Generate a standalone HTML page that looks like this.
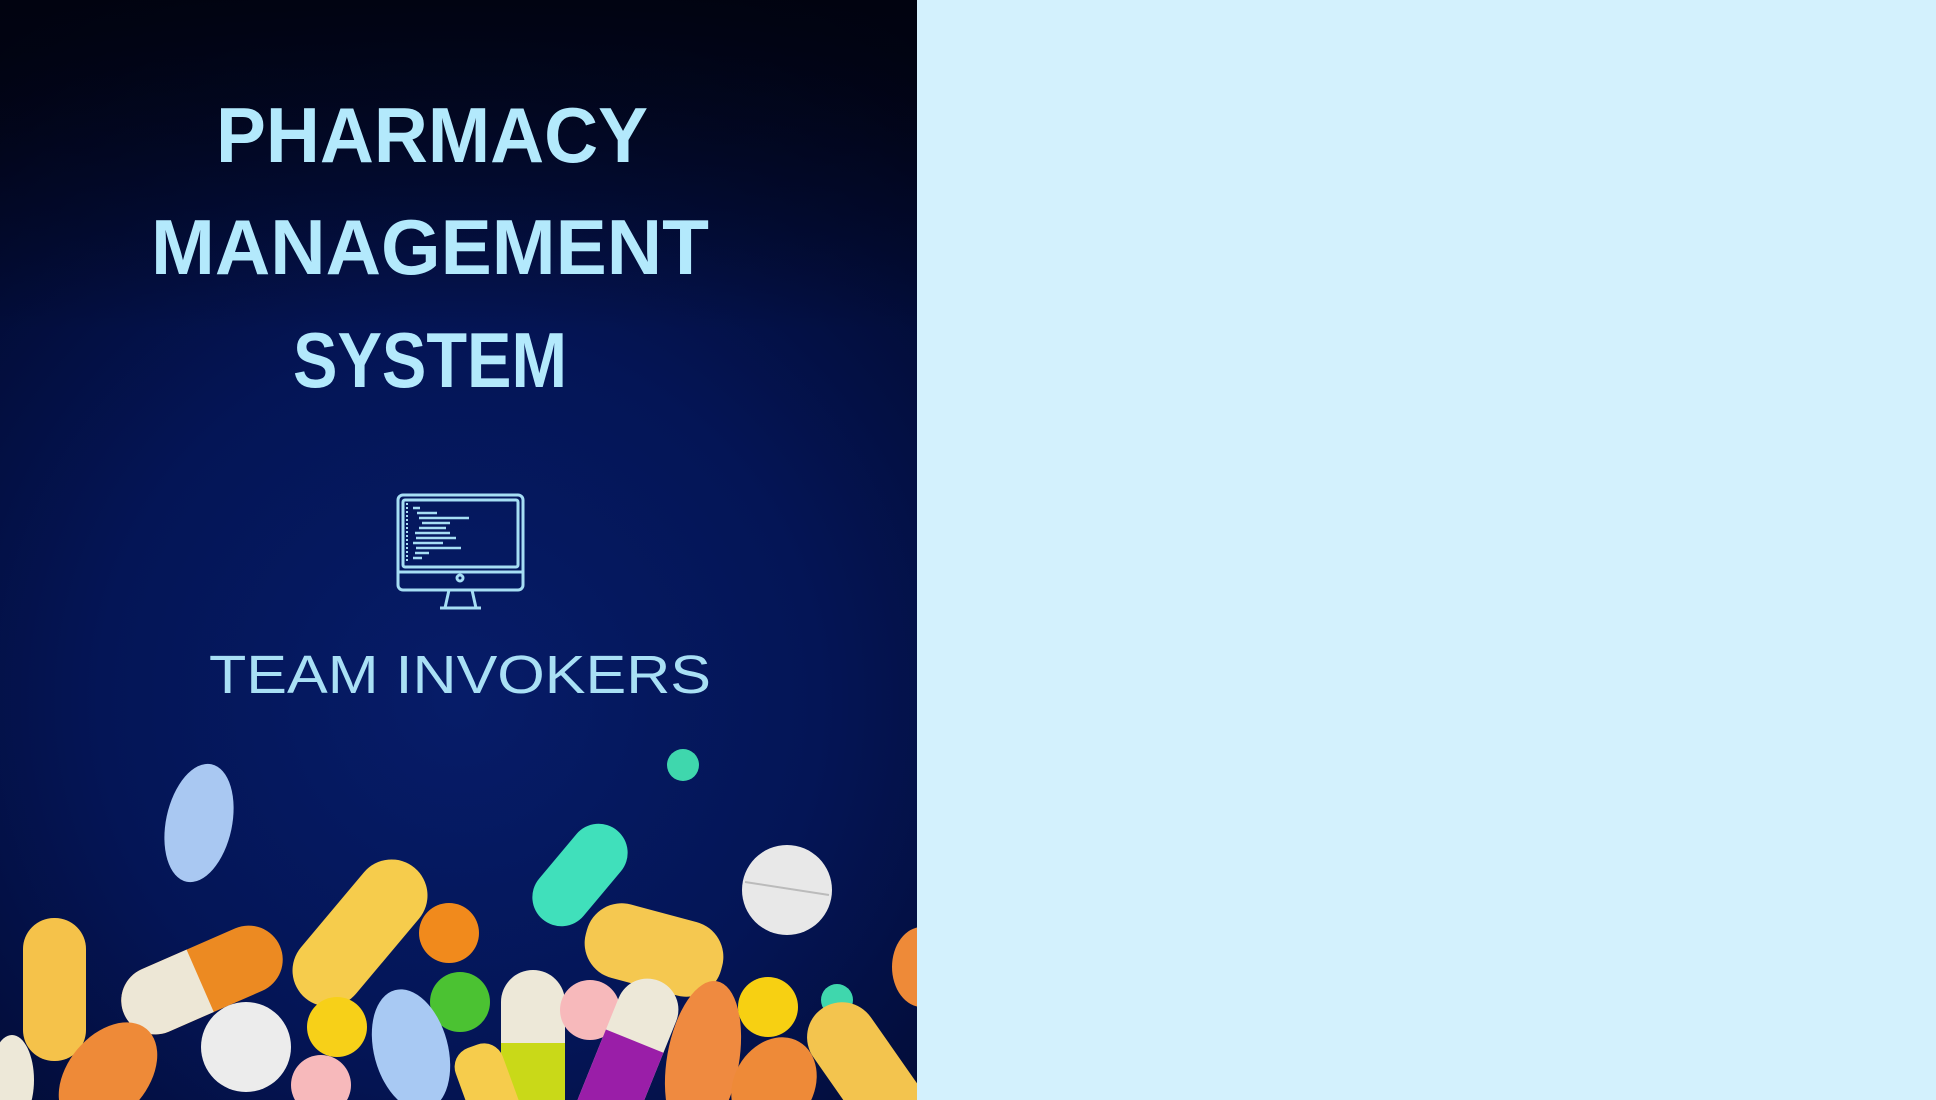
<!DOCTYPE html>
<html><head><meta charset="utf-8"><style>
html,body{margin:0;padding:0;width:1936px;height:1100px;overflow:hidden;background:#d3f1fd}
#l{position:absolute;left:0;top:0;width:917px;height:1100px}
</style></head><body>
<svg id="l" width="917" height="1100" viewBox="0 0 917 1100" xmlns="http://www.w3.org/2000/svg">
<defs>
<radialGradient id="bg" cx="460" cy="700" r="800" gradientUnits="userSpaceOnUse">
<stop offset="0" stop-color="#061c68"/>
<stop offset="0.45" stop-color="#041556"/>
<stop offset="0.85" stop-color="#020a30"/>
<stop offset="1" stop-color="#01041a"/>
</radialGradient>
<linearGradient id="tb" x1="0" y1="0" x2="0" y2="1">
<stop offset="0" stop-color="#01030f" stop-opacity="0.9"/>
<stop offset="0.3" stop-color="#01030f" stop-opacity="0"/>
</linearGradient>
</defs>
<rect width="917" height="1100" fill="url(#bg)"/>
<rect width="917" height="1100" fill="url(#tb)"/>
<g fill="#b3e9fc" font-family="Liberation Sans, sans-serif" font-weight="bold" font-size="78">
<text x="216" y="162" textLength="432" lengthAdjust="spacingAndGlyphs">PHARMACY</text>
<text x="151" y="274" textLength="558" lengthAdjust="spacingAndGlyphs">MANAGEMENT</text>
<text x="293" y="387" textLength="274" lengthAdjust="spacingAndGlyphs">SYSTEM</text>
</g>
<text x="209" y="693" fill="#a9e0f5" font-family="Liberation Sans, sans-serif" font-size="54" textLength="502" lengthAdjust="spacingAndGlyphs">TEAM INVOKERS</text>
<g fill="none" stroke="#a6def4" stroke-width="3">
<rect x="398" y="495" width="125" height="95" rx="5"/>
<rect x="403" y="500" width="115" height="67" rx="2"/>
<line x1="398" y1="572" x2="523" y2="572"/>
<path d="M449 590 L445 608 M472 590 L476 608 M440 608 H481"/>
<circle cx="460" cy="578" r="3"/>
<line x1="407" y1="503" x2="407" y2="563" stroke-dasharray="2 2" stroke-width="2"/>
</g>
<g stroke="#a6def4" stroke-width="2.5">
<path d="M413 508h7M417 513h20M419 518h50M422 523h28M419 528h27M415 533h35M416 538h40M413 543h30M416 548h45M415 553h14M413 558h9"/>
</g>
<g>
<ellipse cx="199" cy="823" rx="33" ry="60" transform="rotate(12 199 823)" fill="#a9c8f2"/>
<circle cx="683" cy="765" r="16" fill="#3fd7ad"/>
<rect x="522" y="846" width="116" height="58" rx="29" transform="rotate(-50 580 875)" fill="#40e0bb"/>
<circle cx="787" cy="890" r="45" fill="#e8e8e8"/>
<line x1="745" y1="882" x2="829" y2="895" stroke="#bbb" stroke-width="2"/>
<rect x="23" y="918" width="63" height="143" rx="31" fill="#f5c24a"/>
<g transform="rotate(-23.6 202 980)"><rect x="117" y="946" width="170" height="68" rx="34" fill="#ec8a22"/><path d="M151 946 H200 V1014 H151 A34 34 0 0 1 151 946Z" fill="#ede7d6"/></g>
<rect x="275" y="897" width="170" height="72" rx="36" transform="rotate(-50 360 933)" fill="#f6cc4c"/>
<circle cx="449" cy="933" r="30" fill="#f18a1c"/>
<rect x="584" y="912" width="140" height="76" rx="36" transform="rotate(15 654 950)" fill="#f5c850"/>
<circle cx="460" cy="1002" r="30" fill="#4bc232"/>
<circle cx="246" cy="1047" r="45" fill="#ececec"/>
<circle cx="337" cy="1027" r="30" fill="#f7d018"/>
<ellipse cx="411" cy="1050" rx="37" ry="62" transform="rotate(-15 411 1050)" fill="#a8c9f3"/>
<rect x="501" y="970" width="64" height="160" rx="32" fill="#ede8d8"/>
<rect x="501" y="1043" width="64" height="70" fill="#c9d918"/>
<circle cx="590" cy="1010" r="30" fill="#f7b9bb"/>
<g transform="rotate(22 630 1050)"><rect x="600" y="975" width="62" height="170" rx="31" fill="#ede8d8"/><rect x="600" y="1040" width="62" height="110" fill="#9a1ea8"/></g>
<ellipse cx="703" cy="1060" rx="36" ry="80" transform="rotate(10 703 1060)" fill="#ef8a40"/>
<circle cx="768" cy="1007" r="30" fill="#f7d012"/>
<circle cx="837" cy="1000" r="16" fill="#3fd7ad"/>
<ellipse cx="922" cy="967" rx="30" ry="40" fill="#ee8a38"/>
<rect x="790" y="1035" width="150" height="70" rx="35" transform="rotate(55 865 1070)" fill="#f3c44e"/>
<ellipse cx="774" cy="1085" rx="40" ry="50" transform="rotate(30 774 1085)" fill="#ee8a38"/>
<ellipse cx="108" cy="1075" rx="40" ry="60" transform="rotate(40 108 1075)" fill="#ee8a38"/>
<ellipse cx="12" cy="1080" rx="22" ry="45" fill="#ede8d8"/>
<rect x="455" y="1045" width="50" height="90" rx="20" transform="rotate(-20 480 1067)" fill="#f6cc4c"/>
<circle cx="321" cy="1085" r="30" fill="#f7b9bb"/>
</g>
</svg>
</body></html>
